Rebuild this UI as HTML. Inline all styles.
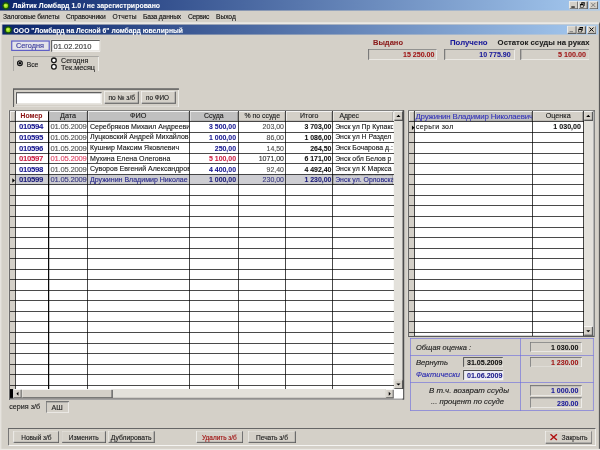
<!DOCTYPE html>
<html lang="ru"><head><meta charset="utf-8"><title>Лайтик Ломбард</title>
<style>
html,body{margin:0;padding:0;background:#d4d0c8;overflow:hidden}
body{width:600px;height:450px;position:relative}
#root{position:absolute;left:0;top:0;width:1024px;height:768px;transform:scale(0.5859375);transform-origin:0 0;filter:saturate(1.001);font-family:"Liberation Sans",sans-serif;font-size:12px;overflow:hidden}
.a{position:absolute;box-sizing:border-box}
#ov{position:absolute;left:0;top:0;width:600px;height:450px;overflow:hidden}
#ov i{position:absolute;display:block}
.t{white-space:nowrap;-webkit-text-stroke:0.22px currentColor}
.title{background:linear-gradient(90deg,#0a246a 0%,#a6caf0 100%)}
.tt{color:#fff;font-weight:bold}
.menu{color:#101010}
.bold,.tt{font-weight:bold;-webkit-text-stroke:0.12px currentColor}
.it{font-style:italic}
.cap{background:#d4d0c8;box-shadow:inset 1px 1px 0 #fff, inset -1px -1px 0 #404040, inset -2px -2px 0 #808080}
.btn{background:#d4d0c8;box-shadow:inset 1px 1px 0 #fff, inset -1px -1px 0 #505050, inset -2px -2px 0 #8c8c8c}
.edit{background:#fff;box-shadow:inset 1px 1px 0 #808080, inset -1px -1px 0 #fff, inset 2px 2px 0 #404040, inset -2px -2px 0 #d4d0c8}
.sunk1{box-shadow:inset 1px 1px 0 #808080, inset -1px -1px 0 #fff}
.fld{box-shadow:inset 1px 1px 0 #686868, inset -1px -1px 0 #fff, inset 2px 2px 0 #909090}
.fld2{box-shadow:inset 1px 1px 0 #808080, inset -1px -1px 0 #fff, inset 2px 2px 0 #404040}
.g{overflow:hidden}
.track{background:#e3e1db}
.sbtn{background:#d4d0c8;box-shadow:inset 1px 1px 0 #fff, inset -1px -1px 0 #404040, inset -2px -2px 0 #808080}
</style></head>
<body><div id="root">
<div class="a title" style="left:0px;top:0px;width:1024px;height:17.5px;"></div>
<svg class="a" style="left:2.4px;top:1.6px" width="16" height="16" viewBox="0 0 16 16"><polygon points="15.8,8.0 13.3,9.7 14.3,12.6 11.3,12.5 10.4,15.4 8.0,13.6 5.6,15.4 4.7,12.5 1.7,12.6 2.7,9.7 0.2,8.0 2.7,6.3 1.7,3.4 4.7,3.5 5.6,0.6 8.0,2.4 10.4,0.6 11.3,3.5 14.3,3.4 13.3,6.3" fill="#174f0e"/><circle cx="8" cy="8" r="4" fill="#8fdc14"/><circle cx="7.4" cy="7.4" r="2.2" fill="#c8f050"/></svg>
<div id="ttl" class="a t tt" style="left:21.33px;top:0.73px;height:18px;line-height:18px;font-size:11.86px;">Лайтик Ломбард 1.0 / не зарегистрировано</div>
<div class="a cap" style="left:971px;top:2px;width:16px;height:14px;"></div>
<div class="a " style="left:975px;top:11px;width:6px;height:2px;background:#000"></div>
<div class="a cap" style="left:987px;top:2px;width:16px;height:14px;"></div>
<div class="a " style="left:992px;top:4px;width:6px;height:6px;border:1px solid #000;border-top-width:2px"></div>
<div class="a " style="left:990px;top:7px;width:6px;height:6px;border:1px solid #000;border-top-width:2px;background:#d4d0c8"></div>
<div class="a cap" style="left:1005px;top:2px;width:16px;height:14px;"></div>
<svg class="a" style="left:1005px;top:2px" width="16" height="14" viewBox="0 0 16 14"><path d="M4 3 L11 10 M11 3 L4 10" stroke="#808080" stroke-width="1.7"/></svg>
<div id="m0" class="a t menu" style="left:5.12px;top:19.84px;height:18px;line-height:18px;font-size:11.40px;;letter-spacing:-0.185px">Залоговые билеты</div>
<div id="m1" class="a t menu" style="left:112.64px;top:19.84px;height:18px;line-height:18px;font-size:11.40px;;letter-spacing:-0.130px">Справочники</div>
<div id="m2" class="a t menu" style="left:192.00px;top:19.84px;height:18px;line-height:18px;font-size:11.40px;;letter-spacing:0.334px">Отчеты</div>
<div id="m3" class="a t menu" style="left:244.05px;top:19.84px;height:18px;line-height:18px;font-size:11.40px;;letter-spacing:-0.273px">База данных</div>
<div id="m4" class="a t menu" style="left:320.85px;top:19.84px;height:18px;line-height:18px;font-size:11.40px;;letter-spacing:-0.530px">Сервис</div>
<div id="m5" class="a t menu" style="left:368.64px;top:19.84px;height:18px;line-height:18px;font-size:11.40px;;letter-spacing:-0.076px">Выход</div>
<div class="a " style="left:0px;top:38px;width:1024px;height:740px;background:#d4d0c8;box-shadow:inset 1px 1px 0 #d4d0c8, inset -1px -1px 0 #404040, inset 2px 2px 0 #fff, inset -2px -2px 0 #808080"></div>
<div class="a title" style="left:4px;top:42px;width:1017px;height:17px;"></div>
<svg class="a" style="left:6px;top:43px" width="16" height="16" viewBox="0 0 16 16"><polygon points="15.8,8.0 13.3,9.7 14.3,12.6 11.3,12.5 10.4,15.4 8.0,13.6 5.6,15.4 4.7,12.5 1.7,12.6 2.7,9.7 0.2,8.0 2.7,6.3 1.7,3.4 4.7,3.5 5.6,0.6 8.0,2.4 10.4,0.6 11.3,3.5 14.3,3.4 13.3,6.3" fill="#174f0e"/><circle cx="8" cy="8" r="4" fill="#8fdc14"/><circle cx="7.4" cy="7.4" r="2.2" fill="#c8f050"/></svg>
<div id="ctitle" class="a t tt" style="left:23.21px;top:42.88px;height:18px;line-height:18px;font-size:11.57px;">ООО "Ломбард на Лесной 6" ломбард ювелирный</div>
<div class="a cap" style="left:968px;top:44px;width:16px;height:14px;"></div>
<div class="a " style="left:972px;top:53px;width:6px;height:2px;background:#8a8a8a"></div>
<div class="a cap" style="left:984px;top:44px;width:16px;height:14px;"></div>
<div class="a " style="left:989px;top:46px;width:6px;height:6px;border:1px solid #000;border-top-width:2px"></div>
<div class="a " style="left:987px;top:49px;width:6px;height:6px;border:1px solid #000;border-top-width:2px;background:#d4d0c8"></div>
<div class="a cap" style="left:1002px;top:44px;width:16px;height:14px;"></div>
<svg class="a" style="left:1002px;top:44px" width="16" height="14" viewBox="0 0 16 14"><path d="M4 3 L11 10 M11 3 L4 10" stroke="#000" stroke-width="1.7"/></svg>
<div class="a " style="left:18.5px;top:68.5px;width:66px;height:18.5px;background:#e4e4ea;border:2px solid #5c5cc4"></div>
<div id="seg" class="a t " style="left:27.31px;top:68.82px;height:18px;line-height:18px;font-size:12.47px;color:#38389c">Сегодня</div>
<div class="a edit" style="left:87px;top:68px;width:84px;height:20px;"></div>
<div id="date" class="a t " style="left:91.48px;top:69.85px;height:18px;line-height:18px;font-size:12.90px;color:#404040">01.02.2010</div>
<div class="a sunk1" style="left:22px;top:96px;width:147px;height:26px;"></div>
<svg class="a" style="left:27px;top:101px" width="14" height="14" viewBox="0 0 14 14"><circle cx="7" cy="7" r="4" fill="#fff" stroke="#181818" stroke-width="2.2"/><circle cx="7" cy="7" r="2.2" fill="#000"/></svg>
<div id="r0" class="a t " style="left:45.57px;top:100.57px;height:18px;line-height:18px;font-size:11.49px;color:#202020">Все</div>
<svg class="a" style="left:84.8px;top:96px" width="14" height="14" viewBox="0 0 14 14"><circle cx="7" cy="7" r="4" fill="#fff" stroke="#181818" stroke-width="2.2"/></svg>
<svg class="a" style="left:84.8px;top:107.4px" width="14" height="14" viewBox="0 0 14 14"><circle cx="7" cy="7" r="4" fill="#fff" stroke="#181818" stroke-width="2.2"/></svg>
<div id="r1" class="a t " style="left:104.11px;top:94.77px;height:18px;line-height:18px;font-size:12.17px;color:#202020">Сегодня</div>
<div id="r2" class="a t " style="left:104.11px;top:105.69px;height:18px;line-height:18px;font-size:12.40px;color:#202020">Тек.месяц</div>
<div class="a " style="left:22px;top:150.5px;width:283px;height:32px;box-shadow:inset 1px 1px 0 #707070, inset 2px 2px 0 #505050, inset -1px -1px 0 #fff"></div>
<div class="a edit" style="left:27px;top:157px;width:147px;height:21px;"></div>
<div class="a btn" style="left:178px;top:155px;width:59px;height:22px;"></div>
<div class="a btn" style="left:241px;top:155px;width:59px;height:22px;"></div>
<div id="sb1" class="a t " style="left:185.00px;top:158.25px;height:18px;line-height:18px;font-size:11.25px;color:#202020">по № з/б</div>
<div id="sb2" class="a t " style="left:249.17px;top:158.25px;height:18px;line-height:18px;font-size:10.82px;color:#202020">по ФИО</div>
<div id="l1" class="a t bold" style="left:636.59px;top:63.53px;height:18px;line-height:18px;font-size:12.86px;color:#8b1a1a">Выдано</div>
<div id="l2" class="a t bold" style="left:768.00px;top:63.53px;height:18px;line-height:18px;font-size:13.29px;color:#1a1a9a">Получено</div>
<div id="l3" class="a t bold" style="left:849.24px;top:63.53px;height:18px;line-height:18px;font-size:13.24px;color:#202020">Остаток ссуды на руках</div>
<div class="a fld" style="left:628px;top:83px;width:118px;height:18.6px;background:#d4d0c8"></div>
<div class="a fld" style="left:758px;top:83px;width:121px;height:18.6px;background:#d4d0c8"></div>
<div class="a fld" style="left:888px;top:83px;width:118px;height:18.6px;background:#d4d0c8"></div>
<div id="f1" class="a t bold" style="left:687.79px;top:83.84px;height:18px;line-height:18px;font-size:12.05px;color:#a01818">15 250.00</div>
<div id="f2" class="a t bold" style="left:818.01px;top:83.84px;height:18px;line-height:18px;font-size:12.01px;color:#1a1a9a">10 775.90</div>
<div id="f3" class="a t bold" style="left:952.32px;top:83.84px;height:18px;line-height:18px;font-size:12.29px;color:#a01818">5 100.00</div>
<div class="a " style="left:15px;top:188px;width:675px;height:494px;background:#fff;box-shadow:inset 1px 1px 0 #808080, inset 2px 2px 0 #585858, inset -2px -2px 0 #5a5a5a"></div>
<div class="a " style="left:17px;top:190px;width:9px;height:17px;background:#d4d0c8;box-shadow:inset 1px 1px 0 #fff, inset -1px -1px 0 #808080"></div>
<div class="a " style="left:27px;top:190px;width:56px;height:17px;background:#fff;box-shadow:inset 1px 1px 0 #fff, inset -1px -1px 0 #808080"></div>
<div id="h1" class="a t bold" style="left:35.16px;top:189.49px;height:18px;line-height:18px;font-size:11.53px;color:#8c1414;">Номер</div>
<div class="a " style="left:84px;top:190px;width:65px;height:17px;background:#c0c0c0;box-shadow:inset 1px 1px 0 #fff, inset -1px -1px 0 #808080"></div>
<div id="h2" class="a t " style="left:102.40px;top:189.49px;height:18px;line-height:18px;font-size:12.33px;color:#202020;">Дата</div>
<div class="a " style="left:150px;top:190px;width:173px;height:17px;background:#c0c0c0;box-shadow:inset 1px 1px 0 #fff, inset -1px -1px 0 #808080"></div>
<div id="h3" class="a t " style="left:221.87px;top:189.49px;height:18px;line-height:18px;font-size:12.41px;color:#202020;">ФИО</div>
<div class="a " style="left:324px;top:190px;width:82px;height:17px;background:#c0c0c0;box-shadow:inset 1px 1px 0 #fff, inset -1px -1px 0 #808080"></div>
<div id="h4" class="a t " style="left:348.16px;top:189.49px;height:18px;line-height:18px;font-size:11.82px;color:#202020;">Ссуда</div>
<div class="a " style="left:407px;top:190px;width:80px;height:17px;background:#d4d0c8;box-shadow:inset 1px 1px 0 #fff, inset -1px -1px 0 #808080"></div>
<div id="h5" class="a t " style="left:417.11px;top:189.49px;height:18px;line-height:18px;font-size:11.80px;color:#202020;">% по ссуде</div>
<div class="a " style="left:488px;top:190px;width:79px;height:17px;background:#d4d0c8;box-shadow:inset 1px 1px 0 #fff, inset -1px -1px 0 #808080"></div>
<div id="h6" class="a t " style="left:512.00px;top:189.49px;height:18px;line-height:18px;font-size:11.99px;color:#202020;">Итого</div>
<div class="a " style="left:568px;top:190px;width:103px;height:17px;background:#d4d0c8;box-shadow:inset 1px 1px 0 #fff, inset -1px -1px 0 #808080"></div>
<div id="h7" class="a t " style="left:579.24px;top:189.49px;height:18px;line-height:18px;font-size:11.68px;color:#202020;">Адрес</div>
<div class="a " style="left:17px;top:208px;width:9px;height:455.5px;background:#d4d0c8"></div>
<div class="a " style="left:27px;top:298px;width:644px;height:17px;background:#cdcdd2"></div>
<div class="a " style="left:82px;top:190px;width:2px;height:473.5px;background:#000"></div>
<div id="c1_0" class="a t bold" style="left:32.43px;top:207.50px;height:18px;line-height:18px;font-size:13.20px;color:#161690;letter-spacing:-0.508px">010594</div>
<div id="c2_0" class="a t " style="left:86.36px;top:207.50px;height:18px;line-height:18px;font-size:13.00px;color:#585858;letter-spacing:-0.398px">01.05.2009</div>
<div class="a t g" style="left:150px;top:208px;width:173px;height:17px;line-height:17px;color:#202020;font-size:12px"><span style="margin-left:3.5px">Серебряков Михаил Андрееви</span></div>
<div class="a t g" style="left:568px;top:208px;width:103px;height:17px;line-height:17px;color:#202020;font-size:11.8px"><span style="margin-left:4px">Энск ул Пр Купакс</span></div>
<div id="n4_0" class="a t bold" style="right:621.23px;top:207.50px;height:18px;line-height:18px;font-size:11.84px;color:#161690">3 500,00</div>
<div id="n5_0" class="a t " style="right:539.31px;top:207.50px;height:18px;line-height:18px;font-size:11.94px;color:#505050">203,00</div>
<div id="n6_0" class="a t bold" style="right:458.41px;top:207.50px;height:18px;line-height:18px;font-size:11.84px;color:#101010">3 703,00</div>
<div id="c1_1" class="a t bold" style="left:32.43px;top:225.50px;height:18px;line-height:18px;font-size:13.20px;color:#161690;letter-spacing:-0.508px">010595</div>
<div id="c2_1" class="a t " style="left:86.36px;top:225.50px;height:18px;line-height:18px;font-size:13.00px;color:#585858;letter-spacing:-0.398px">01.05.2009</div>
<div class="a t g" style="left:150px;top:226px;width:173px;height:17px;line-height:17px;color:#202020;font-size:12px"><span style="margin-left:3.5px">Луцковский Андрей Михайлов</span></div>
<div class="a t g" style="left:568px;top:226px;width:103px;height:17px;line-height:17px;color:#202020;font-size:11.8px"><span style="margin-left:4px">Энск ул Н Раздел</span></div>
<div id="n4_1" class="a t bold" style="right:621.23px;top:225.50px;height:18px;line-height:18px;font-size:11.84px;color:#161690">1 000,00</div>
<div id="n5_1" class="a t " style="right:539.31px;top:225.50px;height:18px;line-height:18px;font-size:11.94px;color:#505050">86,00</div>
<div id="n6_1" class="a t bold" style="right:458.41px;top:225.50px;height:18px;line-height:18px;font-size:11.84px;color:#101010">1 086,00</div>
<div id="c1_2" class="a t bold" style="left:32.43px;top:243.50px;height:18px;line-height:18px;font-size:13.20px;color:#161690;letter-spacing:-0.508px">010596</div>
<div id="c2_2" class="a t " style="left:86.36px;top:243.50px;height:18px;line-height:18px;font-size:13.00px;color:#585858;letter-spacing:-0.398px">01.05.2009</div>
<div class="a t g" style="left:150px;top:244px;width:173px;height:17px;line-height:17px;color:#202020;font-size:12px"><span style="margin-left:3.5px">Кушнир Максим Яковлевич</span></div>
<div class="a t g" style="left:568px;top:244px;width:103px;height:17px;line-height:17px;color:#202020;font-size:11.8px"><span style="margin-left:4px">Энск Бочарова д.:</span></div>
<div id="n4_2" class="a t bold" style="right:621.23px;top:243.50px;height:18px;line-height:18px;font-size:11.84px;color:#161690">250,00</div>
<div id="n5_2" class="a t " style="right:539.31px;top:243.50px;height:18px;line-height:18px;font-size:11.94px;color:#505050">14,50</div>
<div id="n6_2" class="a t bold" style="right:458.41px;top:243.50px;height:18px;line-height:18px;font-size:11.84px;color:#101010">264,50</div>
<div id="c1_3" class="a t bold" style="left:32.43px;top:261.50px;height:18px;line-height:18px;font-size:13.20px;color:#cc2044;letter-spacing:-0.508px">010597</div>
<div id="c2_3" class="a t " style="left:86.36px;top:261.50px;height:18px;line-height:18px;font-size:13.00px;color:#e04868;letter-spacing:-0.398px">01.05.2009</div>
<div class="a t g" style="left:150px;top:262px;width:173px;height:17px;line-height:17px;color:#202020;font-size:12px"><span style="margin-left:3.5px">Мухина Елена Олеговна</span></div>
<div class="a t g" style="left:568px;top:262px;width:103px;height:17px;line-height:17px;color:#202020;font-size:11.8px"><span style="margin-left:4px">Энск обл Белов р</span></div>
<div id="n4_3" class="a t bold" style="right:621.23px;top:261.50px;height:18px;line-height:18px;font-size:11.84px;color:#cc2044">5 100,00</div>
<div id="n5_3" class="a t " style="right:539.31px;top:261.50px;height:18px;line-height:18px;font-size:11.94px;color:#303030">1071,00</div>
<div id="n6_3" class="a t bold" style="right:458.41px;top:261.50px;height:18px;line-height:18px;font-size:11.84px;color:#101010">6 171,00</div>
<div id="c1_4" class="a t bold" style="left:32.43px;top:279.50px;height:18px;line-height:18px;font-size:13.20px;color:#161690;letter-spacing:-0.508px">010598</div>
<div id="c2_4" class="a t " style="left:86.36px;top:279.50px;height:18px;line-height:18px;font-size:13.00px;color:#585858;letter-spacing:-0.398px">01.05.2009</div>
<div class="a t g" style="left:150px;top:280px;width:173px;height:17px;line-height:17px;color:#202020;font-size:12px"><span style="margin-left:3.5px">Суворов Евгений Александров</span></div>
<div class="a t g" style="left:568px;top:280px;width:103px;height:17px;line-height:17px;color:#202020;font-size:11.8px"><span style="margin-left:4px">Энск ул К Маркса</span></div>
<div id="n4_4" class="a t bold" style="right:621.23px;top:279.50px;height:18px;line-height:18px;font-size:11.84px;color:#161690">4 400,00</div>
<div id="n5_4" class="a t " style="right:539.31px;top:279.50px;height:18px;line-height:18px;font-size:11.94px;color:#505050">92,40</div>
<div id="n6_4" class="a t bold" style="right:458.41px;top:279.50px;height:18px;line-height:18px;font-size:11.84px;color:#101010">4 492,40</div>
<div id="c1_5" class="a t bold" style="left:32.43px;top:297.50px;height:18px;line-height:18px;font-size:13.20px;color:#1a1a7a;letter-spacing:-0.508px">010599</div>
<div id="c2_5" class="a t " style="left:86.36px;top:297.50px;height:18px;line-height:18px;font-size:13.00px;color:#3a3a80;letter-spacing:-0.398px">01.05.2009</div>
<div class="a t g" style="left:150px;top:298px;width:173px;height:17px;line-height:17px;color:#2a2a8a;font-size:12px"><span style="margin-left:3.5px">Дружинин Владимир Николае</span></div>
<div class="a t g" style="left:568px;top:298px;width:103px;height:17px;line-height:17px;color:#2a2a8a;font-size:11.8px"><span style="margin-left:4px">Энск ул. Орловска</span></div>
<div id="n4_5" class="a t bold" style="right:621.23px;top:297.50px;height:18px;line-height:18px;font-size:11.84px;color:#1a1a7a">1 000,00</div>
<div id="n5_5" class="a t " style="right:539.31px;top:297.50px;height:18px;line-height:18px;font-size:11.94px;color:#3a3a80">230,00</div>
<div id="n6_5" class="a t bold" style="right:458.41px;top:297.50px;height:18px;line-height:18px;font-size:11.84px;color:#1a1a7a">1 230,00</div>
<svg class="a" style="left:19px;top:303px" width="8" height="10" viewBox="0 0 8 10"><path d="M2 1 L6.5 5 L2 9 Z" fill="#000"/></svg>
<div class="a " style="left:568px;top:298px;width:103px;height:17px;border:1px dotted #000"></div>
<div class="a track" style="left:671.5px;top:190px;width:16px;height:473.5px;"></div>
<div class="a sbtn" style="left:671.5px;top:190px;width:16px;height:16px;"></div>
<svg class="a" style="left:671.5px;top:190px" width="16" height="16" viewBox="0 0 16 16"><path d="M4.5 9.5 L8 6 L11.5 9.5 Z" fill="#000"/></svg>
<div class="a sbtn" style="left:671.5px;top:647.5px;width:16px;height:16px;"></div>
<svg class="a" style="left:671.5px;top:647.5px" width="16" height="16" viewBox="0 0 16 16"><path d="M4.5 6.5 L8 10 L11.5 6.5 Z" fill="#000"/></svg>
<div class="a " style="left:687.2px;top:188px;width:2.8px;height:494px;background:#4c4c4c"></div>
<div class="a track" style="left:17px;top:663.5px;width:655px;height:16.5px;"></div>
<div class="a " style="left:17px;top:663.5px;width:6px;height:16.5px;background:#000"></div>
<div class="a sbtn" style="left:23px;top:663.5px;width:14px;height:16.5px;"></div>
<svg class="a" style="left:23px;top:663.5px" width="14" height="15" viewBox="0 0 14 15"><path d="M8.5 4.5 L5 8 L8.5 11.5 Z" fill="#000"/></svg>
<div class="a sbtn" style="left:37px;top:663.5px;width:155px;height:16.5px;"></div>
<div class="a sbtn" style="left:658px;top:663.5px;width:14px;height:16.5px;"></div>
<svg class="a" style="left:658px;top:663.5px" width="14" height="15" viewBox="0 0 14 15"><path d="M5.5 4.5 L9 8 L5.5 11.5 Z" fill="#000"/></svg>
<div class="a " style="left:672px;top:663.5px;width:16px;height:16.5px;background:#fff"></div>
<div class="a " style="left:17px;top:679px;width:655px;height:1.2px;background:#505050"></div>
<div class="a " style="left:696px;top:188px;width:319px;height:387px;background:#fff;box-shadow:inset 1px 1px 0 #808080, inset 2px 2px 0 #585858, inset -2px -2px 0 #5a5a5a"></div>
<div class="a " style="left:698px;top:190px;width:9px;height:383px;background:#d4d0c8"></div>
<div class="a " style="left:698px;top:190px;width:9px;height:17px;background:#d4d0c8;box-shadow:inset 1px 1px 0 #fff, inset -1px -1px 0 #808080"></div>
<div class="a " style="left:708px;top:190px;width:200px;height:17px;background:#c0c0c0;box-shadow:inset 1px 1px 0 #fff, inset -1px -1px 0 #808080"></div>
<div class="a " style="left:909px;top:190px;width:86px;height:17px;background:#d4d0c8;box-shadow:inset 1px 1px 0 #fff, inset -1px -1px 0 #808080"></div>
<div class="a t g" style="left:708px;top:190px;width:200px;height:17px;line-height:17px;color:#3030b8;font-size:13.4px;letter-spacing:-0.25px;-webkit-text-stroke:0.15px currentColor"><span id="rh1" style="margin-left:1px">Дружинин Владимир Николаевич</span></div>
<div id="rh2" class="a t " style="left:931.33px;top:189.49px;height:18px;line-height:18px;font-size:12.32px;color:#202020">Оценка</div>
<svg class="a" style="left:700.6px;top:213px" width="8" height="10" viewBox="0 0 8 10"><path d="M2 1 L6.5 5 L2 9 Z" fill="#000"/></svg>
<div id="rd1" class="a t " style="left:709.97px;top:207.50px;height:18px;line-height:18px;font-size:11.88px;color:#202020;letter-spacing:0.6px">серьги зол</div>
<div id="rd2" class="a t bold" style="left:944.30px;top:207.50px;height:18px;line-height:18px;font-size:12.15px;color:#101010">1 030,00</div>
<div class="a track" style="left:996px;top:190px;width:16px;height:383px;"></div>
<div class="a sbtn" style="left:996px;top:190px;width:16px;height:16px;"></div>
<svg class="a" style="left:996px;top:190px" width="16" height="16" viewBox="0 0 16 16"><path d="M4.5 9.5 L8 6 L11.5 9.5 Z" fill="#000"/></svg>
<div class="a sbtn" style="left:996px;top:557px;width:16px;height:16px;"></div>
<svg class="a" style="left:996px;top:557px" width="16" height="16" viewBox="0 0 16 16"><path d="M4.5 6.5 L8 10 L11.5 6.5 Z" fill="#000"/></svg>
<div class="a " style="left:700px;top:577px;width:313px;height:1px;background:#6868e0"></div>
<div class="a " style="left:700px;top:606px;width:313px;height:1px;background:#6868e0"></div>
<div class="a " style="left:700px;top:652px;width:313px;height:1px;background:#6868e0"></div>
<div class="a " style="left:700px;top:700px;width:313px;height:1px;background:#6868e0"></div>
<div class="a " style="left:700px;top:577px;width:1px;height:124px;background:#6868e0"></div>
<div class="a " style="left:1012px;top:577px;width:1px;height:124px;background:#6868e0"></div>
<div class="a " style="left:888px;top:577px;width:1px;height:124px;background:#6868e0"></div>
<div id="i1" class="a t it" style="left:709.97px;top:583.90px;height:18px;line-height:18px;font-size:12.71px;color:#202020">Общая оценка :</div>
<div id="i2" class="a t it" style="left:709.97px;top:609.50px;height:18px;line-height:18px;font-size:13.04px;color:#202020">Вернуть</div>
<div id="i3" class="a t it" style="left:709.97px;top:631.00px;height:18px;line-height:18px;font-size:12.93px;color:#2a2ab0">Фактически</div>
<div id="i4" class="a t it" style="left:732.16px;top:656.60px;height:18px;line-height:18px;font-size:13.46px;color:#202020">В т.ч. возврат ссуды</div>
<div id="i5" class="a t it" style="left:735.57px;top:677.08px;height:18px;line-height:18px;font-size:13.05px;color:#202020">... процент по ссуде</div>
<div class="a fld" style="left:904px;top:583px;width:89px;height:18px;background:#d4d0c8"></div>
<div class="a fld" style="left:904px;top:608.5px;width:89px;height:18px;background:#d4d0c8"></div>
<div class="a fld" style="left:904px;top:657px;width:89px;height:18px;background:#d4d0c8"></div>
<div class="a fld" style="left:904px;top:677.5px;width:89px;height:18px;background:#d4d0c8"></div>
<div id="b1" class="a t bold" style="left:940.37px;top:584.24px;height:18px;line-height:18px;font-size:12.02px;color:#101010">1 030.00</div>
<div id="b2" class="a t bold" style="left:940.37px;top:609.50px;height:18px;line-height:18px;font-size:12.02px;color:#a01818">1 230.00</div>
<div id="b3" class="a t bold" style="left:940.37px;top:657.97px;height:18px;line-height:18px;font-size:12.02px;color:#1a1a9a">1 000.00</div>
<div id="b4" class="a t bold" style="left:950.61px;top:680.15px;height:18px;line-height:18px;font-size:11.94px;color:#1a1a9a">230.00</div>
<div class="a fld2" style="left:790px;top:608.5px;width:69px;height:18px;"></div>
<div class="a fld2" style="left:790px;top:630.5px;width:69px;height:18px;background:#ececf4"></div>
<div id="d1" class="a t bold" style="left:797.01px;top:609.84px;height:18px;line-height:18px;font-size:12.07px;color:#101010">31.05.2009</div>
<div id="d2" class="a t bold" style="left:797.01px;top:632.02px;height:18px;line-height:18px;font-size:12.07px;color:#1a1a8a">01.06.2009</div>
<div id="ser" class="a t " style="left:15.87px;top:685.10px;height:18px;line-height:18px;font-size:12.19px;color:#202020">серия з/б</div>
<div class="a fld" style="left:78px;top:685px;width:39px;height:20px;"></div>
<div id="ash" class="a t " style="left:87.89px;top:685.61px;height:18px;line-height:18px;font-size:12.07px;color:#202020">АШ</div>
<div class="a " style="left:13px;top:730px;width:1004px;height:31px;box-shadow:inset 1px 1px 0 #7a7a7a, inset -1px -1px 0 #fff, inset 2px 2px 0 #606060"></div>
<div class="a btn" style="left:23px;top:735px;width:78px;height:21px;"></div>
<div class="a btn" style="left:105px;top:735px;width:76px;height:21px;"></div>
<div class="a btn" style="left:184px;top:735px;width:80px;height:21px;"></div>
<div class="a btn" style="left:334.5px;top:735px;width:80.5px;height:21px;"></div>
<div class="a btn" style="left:423px;top:735px;width:82px;height:21px;"></div>
<div class="a btn" style="left:930px;top:735px;width:81px;height:22px;"></div>
<div id="bb1" class="a t " style="left:36.35px;top:737.84px;height:18px;line-height:18px;font-size:11.04px;color:#202020">Новый з/б</div>
<div id="bb2" class="a t " style="left:117.42px;top:737.84px;height:18px;line-height:18px;font-size:11.32px;color:#202020">Изменить</div>
<div id="bb3" class="a t " style="left:188.93px;top:737.84px;height:18px;line-height:18px;font-size:11.57px;color:#202020">Дублировать</div>
<div id="bb4" class="a t " style="left:344.75px;top:737.84px;height:18px;line-height:18px;font-size:10.99px;color:#a01010">Удалить з/б</div>
<div id="bb5" class="a t " style="left:436.91px;top:737.84px;height:18px;line-height:18px;font-size:11.23px;color:#202020">Печать з/б</div>
<div id="bb6" class="a t " style="left:958.46px;top:737.50px;height:18px;line-height:18px;font-size:11.52px;color:#202020">Закрыть</div>
<svg class="a" style="left:938px;top:740px" width="14" height="12" viewBox="0 0 14 12"><path d="M1.5 1 L12.5 11 M12.5 1 L1.5 11" stroke="#b01010" stroke-width="2.4"/></svg>
<div class="a " style="left:0px;top:766.4px;width:1024px;height:2px;background:#ebe9e4"></div>
</div>
<div id="ov"><i style="left:10px;top:121px;width:384px;height:1px;background:rgba(0,0,0,0.71)"></i><i style="left:10px;top:132px;width:384px;height:1px;background:rgba(0,0,0,0.71)"></i><i style="left:10px;top:142px;width:384px;height:1px;background:rgba(0,0,0,0.71)"></i><i style="left:10px;top:153px;width:384px;height:1px;background:rgba(0,0,0,0.71)"></i><i style="left:10px;top:163px;width:384px;height:1px;background:rgba(0,0,0,0.71)"></i><i style="left:10px;top:174px;width:384px;height:1px;background:rgba(0,0,0,0.71)"></i><i style="left:10px;top:184px;width:384px;height:1px;background:rgba(0,0,0,0.71)"></i><i style="left:10px;top:195px;width:384px;height:1px;background:rgba(0,0,0,0.71)"></i><i style="left:10px;top:205px;width:384px;height:1px;background:rgba(0,0,0,0.71)"></i><i style="left:10px;top:216px;width:384px;height:1px;background:rgba(0,0,0,0.71)"></i><i style="left:10px;top:227px;width:384px;height:1px;background:rgba(0,0,0,0.71)"></i><i style="left:10px;top:237px;width:384px;height:1px;background:rgba(0,0,0,0.71)"></i><i style="left:10px;top:248px;width:384px;height:1px;background:rgba(0,0,0,0.71)"></i><i style="left:10px;top:258px;width:384px;height:1px;background:rgba(0,0,0,0.71)"></i><i style="left:10px;top:269px;width:384px;height:1px;background:rgba(0,0,0,0.71)"></i><i style="left:10px;top:279px;width:384px;height:1px;background:rgba(0,0,0,0.71)"></i><i style="left:10px;top:290px;width:384px;height:1px;background:rgba(0,0,0,0.71)"></i><i style="left:10px;top:300px;width:384px;height:1px;background:rgba(0,0,0,0.71)"></i><i style="left:10px;top:311px;width:384px;height:1px;background:rgba(0,0,0,0.71)"></i><i style="left:10px;top:321px;width:384px;height:1px;background:rgba(0,0,0,0.71)"></i><i style="left:10px;top:332px;width:384px;height:1px;background:rgba(0,0,0,0.71)"></i><i style="left:10px;top:343px;width:384px;height:1px;background:rgba(0,0,0,0.71)"></i><i style="left:10px;top:353px;width:384px;height:1px;background:rgba(0,0,0,0.71)"></i><i style="left:10px;top:364px;width:384px;height:1px;background:rgba(0,0,0,0.71)"></i><i style="left:10px;top:374px;width:384px;height:1px;background:rgba(0,0,0,0.71)"></i><i style="left:10px;top:385px;width:384px;height:1px;background:rgba(0,0,0,0.71)"></i><i style="left:15px;top:111px;width:1px;height:278px;background:rgba(0,0,0,0.71)"></i><i style="left:87px;top:111px;width:1px;height:278px;background:rgba(0,0,0,0.71)"></i><i style="left:189px;top:111px;width:1px;height:278px;background:rgba(0,0,0,0.71)"></i><i style="left:238px;top:111px;width:1px;height:278px;background:rgba(0,0,0,0.71)"></i><i style="left:285px;top:111px;width:1px;height:278px;background:rgba(0,0,0,0.71)"></i><i style="left:332px;top:111px;width:1px;height:278px;background:rgba(0,0,0,0.71)"></i><i style="left:409px;top:121px;width:175px;height:1px;background:rgba(0,0,0,0.71)"></i><i style="left:409px;top:132px;width:175px;height:1px;background:rgba(0,0,0,0.71)"></i><i style="left:409px;top:142px;width:175px;height:1px;background:rgba(0,0,0,0.71)"></i><i style="left:409px;top:153px;width:175px;height:1px;background:rgba(0,0,0,0.71)"></i><i style="left:409px;top:163px;width:175px;height:1px;background:rgba(0,0,0,0.71)"></i><i style="left:409px;top:174px;width:175px;height:1px;background:rgba(0,0,0,0.71)"></i><i style="left:409px;top:184px;width:175px;height:1px;background:rgba(0,0,0,0.71)"></i><i style="left:409px;top:195px;width:175px;height:1px;background:rgba(0,0,0,0.71)"></i><i style="left:409px;top:205px;width:175px;height:1px;background:rgba(0,0,0,0.71)"></i><i style="left:409px;top:216px;width:175px;height:1px;background:rgba(0,0,0,0.71)"></i><i style="left:409px;top:227px;width:175px;height:1px;background:rgba(0,0,0,0.71)"></i><i style="left:409px;top:237px;width:175px;height:1px;background:rgba(0,0,0,0.71)"></i><i style="left:409px;top:248px;width:175px;height:1px;background:rgba(0,0,0,0.71)"></i><i style="left:409px;top:258px;width:175px;height:1px;background:rgba(0,0,0,0.71)"></i><i style="left:409px;top:269px;width:175px;height:1px;background:rgba(0,0,0,0.71)"></i><i style="left:409px;top:279px;width:175px;height:1px;background:rgba(0,0,0,0.71)"></i><i style="left:409px;top:290px;width:175px;height:1px;background:rgba(0,0,0,0.71)"></i><i style="left:409px;top:300px;width:175px;height:1px;background:rgba(0,0,0,0.71)"></i><i style="left:409px;top:311px;width:175px;height:1px;background:rgba(0,0,0,0.71)"></i><i style="left:409px;top:321px;width:175px;height:1px;background:rgba(0,0,0,0.71)"></i><i style="left:409px;top:332px;width:175px;height:1px;background:rgba(0,0,0,0.71)"></i><i style="left:414px;top:111px;width:1px;height:225px;background:rgba(0,0,0,0.71)"></i><i style="left:532px;top:111px;width:1px;height:225px;background:rgba(0,0,0,0.71)"></i><i style="left:583px;top:111px;width:1px;height:225px;background:rgba(0,0,0,0.71)"></i></div></body></html>
